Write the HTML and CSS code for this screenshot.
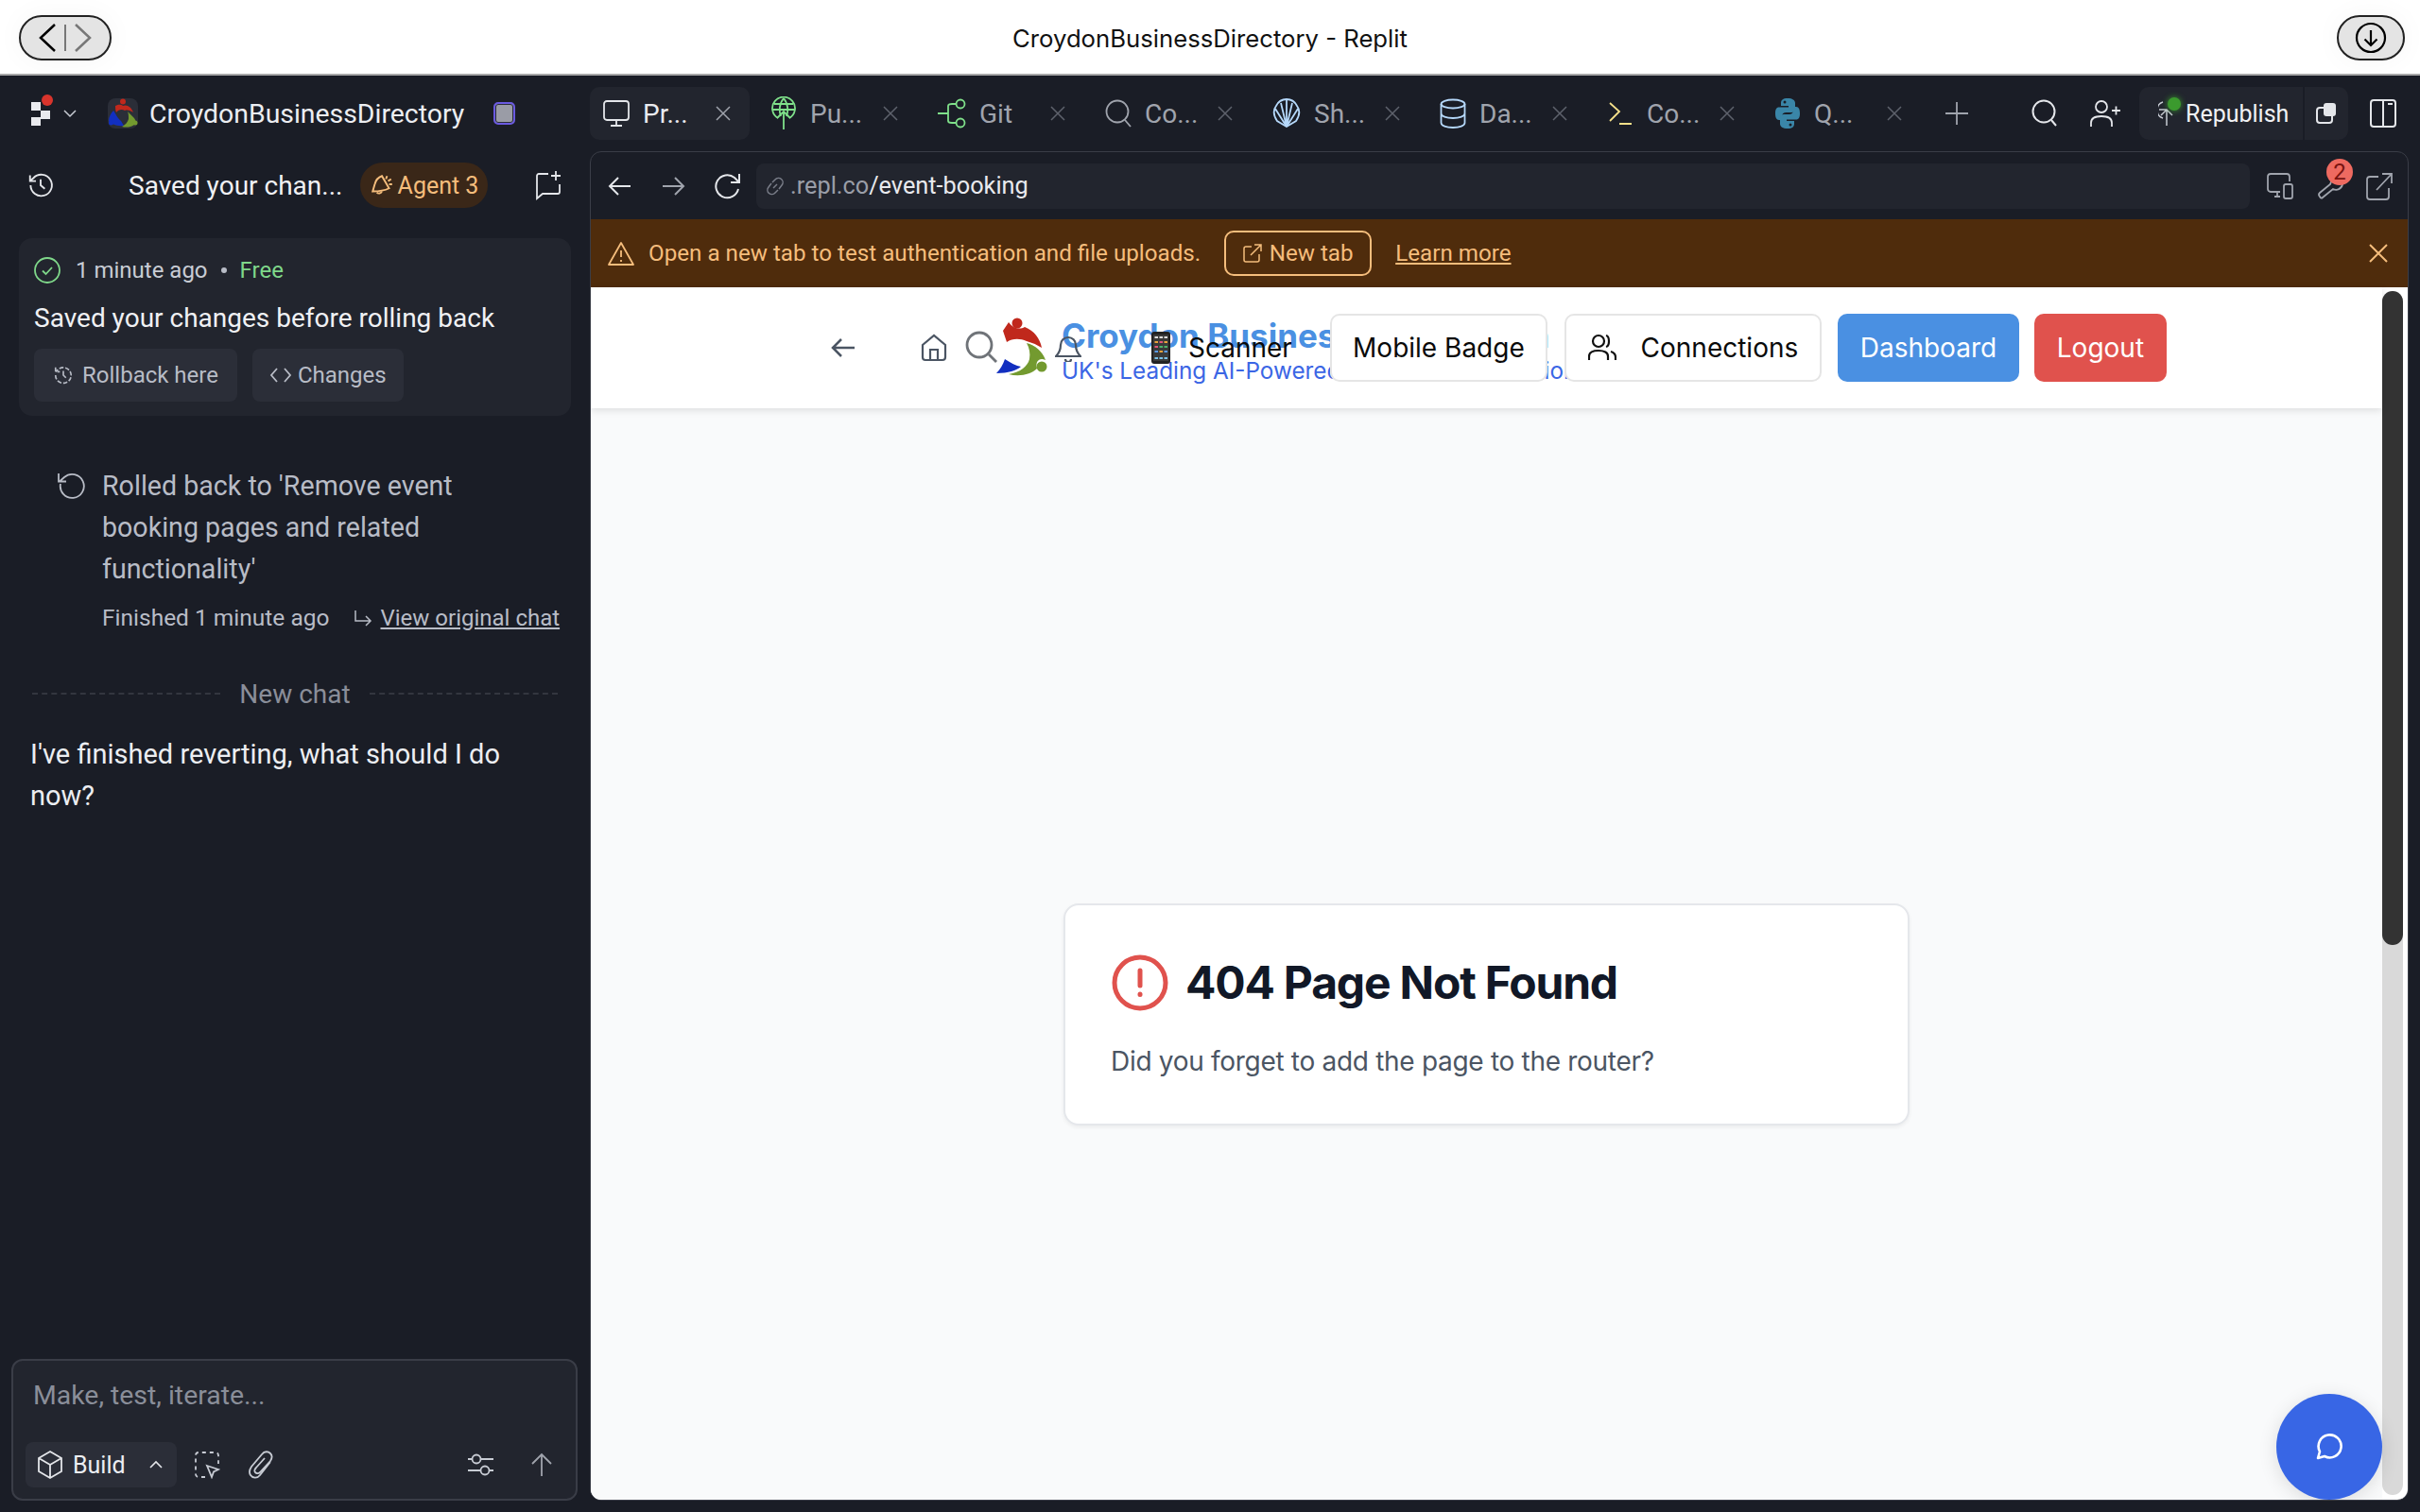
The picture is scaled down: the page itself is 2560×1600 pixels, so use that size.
FILE: index.html
```html
<!DOCTYPE html>
<html lang="en">
<head>
  <meta charset="UTF-8" />
  <title>CroydonBusinessDirectory - Replit</title>
  <link rel="stylesheet" href="styles.css">
</head>
<body>

  <svg class="defs" width="0" height="0">
    <symbol id="brand" viewBox="0 0 64 64">
      <circle cx="27" cy="6" r="5.5" fill="#c0281c"/>
      <path fill="#c0281c" d="M18 5L12 14L16 26C22 22 30 22 37 25Q45 27 53 32C51 22 45 14 35 10C30 13 23 12 18 5Z"/>
      <path fill="#739a2f" d="M37 27C46 29 54 36 57 45C50 42 46 47 48 54C42 60 30 63 18 60C30 58 38 52 40 44C41 38 40 32 37 27Z"/>
      <circle cx="53" cy="52" r="5.5" fill="#739a2f"/>
      <path fill="#122fc0" d="M14 44C20 48 26 51 31 52C26 56 18 59 5 59C9 55 12 50 14 44Z"/>
    </symbol>
    <symbol id="app-mark" viewBox="0 0 32 32">
      <circle cx="16" cy="3.500" r="3" fill="#c0281c"/>
      <path fill="#c0281c" d="M8 8C11 7 13 6 16 8C20 6 25 9 27 15C24 13 21 12 18 13C15 11 11 12 9 15C8 13 8 10 8 8Z"/>
      <path fill="#122fc0" d="M6 13C9 17 10 21 14 24L17 29C10 30 3 27 1 24C1 20 3 16 6 13Z"/>
      <circle cx="3.500" cy="26" r="2.500" fill="#122fc0"/>
      <path fill="#739a2f" d="M21 14L28 21C30 24 30 26 28 28C24 31 19 31 15 30C19 28 21 25 22 22C22 19 22 16 21 14Z"/>
      <circle cx="29" cy="26" r="2.500" fill="#739a2f"/>
    </symbol>
    <symbol id="tab-close" viewBox="0 0 16 16">
      <path d="M1 1L15 15M15 1L1 15" fill="none" stroke="currentColor" stroke-width="1.500"/>
    </symbol>
  </svg>

  <!-- window title bar -->
  <header class="titlebar">
    <div class="pill pill-nav">
      <svg width="26" height="34" viewBox="0 0 26 34"><path d="M21 3L6 17L21 31" fill="none" stroke="#000" stroke-width="2.5"/></svg>
      <span class="pill-sep"></span>
      <svg width="26" height="34" viewBox="0 0 26 34"><path d="M5 3L20 17L5 31" fill="none" stroke="#777" stroke-width="2.5"/></svg>
    </div>
    <div class="window-title">CroydonBusinessDirectory - Replit</div>
    <div class="pill pill-dl">
      <svg width="34" height="34" viewBox="0 0 34 34" fill="none" stroke="#000" stroke-width="2.2"><circle cx="17" cy="17" r="15"/><path d="M17 9V25M10.500 18.500L17 25L23.500 18.500"/></svg>
    </div>
  </header>

  <div class="workspace">

    <!-- left: agent chat -->
    <aside class="sidebar">
      <div class="side-top">
        <div class="replit-logo">
          <span class="rl-dot"></span>
          <span class="rl-sq rl-a"></span><span class="rl-sq rl-b"></span><span class="rl-sq rl-c"></span>
        </div>
        <svg class="ic-chev" width="16" height="10" viewBox="0 0 16 10" fill="none" stroke="#c8ccd4" stroke-width="1.500"><path d="M2 2L8 8L14 2"/></svg>
        <span class="app-icon"><svg width="32" height="32"><use href="#app-mark"/></svg></span>
        <span class="app-name">CroydonBusinessDirectory</span>
        <span class="app-chip"></span>
      </div>

      <div class="side-head">
        <svg class="ic-hist" width="30" height="30" viewBox="0 0 24 24" fill="none" stroke="#e4e6ea" stroke-width="1.500"><path d="M3.500 12A9 9 0 1 0 6 5.800L3 8.500M3 3.500V8.500H8"/><path d="M12 7V12L15.500 15"/></svg>
        <span class="side-title">Saved your chan...</span>
        <span class="agent-pill">
          <svg width="26" height="26" viewBox="0 0 24 24" fill="none" stroke="#f5bd7c" stroke-width="1.800"><path d="M3 18L5 11C6 7 9 4 12 3L19 15C15 17 8 18 3 18Z"/><path d="M7 19A3 3 0 0 0 12 18"/><path d="M17 3L16 6M21 6L18 8M22 11L19 11"/></svg>
          Agent 3
        </span>
        <svg class="ic-newchat" width="30" height="32" viewBox="0 0 30 32" fill="none" stroke="#e4e6ea" stroke-width="1.800"><path d="M15 4H5A2 2 0 0 0 3 6V30L9 25H25A2 2 0 0 0 27 23V15"/><path d="M23 1V11M18 6H28"/></svg>
      </div>

      <section class="checkpoint">
        <div class="cp-meta">
          <svg width="28" height="28" viewBox="0 0 28 28" fill="none" stroke="#7fd88a" stroke-width="1.800"><circle cx="14" cy="14" r="13"/><path d="M9 14.500L12.500 18L19 11"/></svg>
          <span class="cp-time">1 minute ago</span>
          <span class="cp-dot"></span>
          <span class="cp-free">Free</span>
        </div>
        <div class="cp-title">Saved your changes before rolling back</div>
        <div class="cp-actions">
          <button class="cp-btn">
            <svg width="22" height="22" viewBox="0 0 24 24" fill="none" stroke="#b8bcc6" stroke-width="1.800"><path d="M3 12A9 9 0 1 0 6 5.500L3 8M3 3V8H8" stroke-dasharray="5 2"/><path d="M12 7V12L15 15"/></svg>
            Rollback here
          </button>
          <button class="cp-btn cp-btn-code">
            <svg width="24" height="22" viewBox="0 0 24 22" fill="none" stroke="#b8bcc6" stroke-width="1.800"><path d="M8 4L2 11L8 18M16 4L22 11L16 18"/></svg>
            Changes
          </button>
        </div>
      </section>

      <section class="rollback">
        <svg class="rb-icon" width="30" height="32" viewBox="0 0 30 32" fill="none" stroke="#b8bcc6" stroke-width="1.800"><path d="M4 14A12.500 12.500 0 1 0 8 7L3 11.500M2 3V11.500H10"/></svg>
        <div class="rb-body">
          <p class="rb-text">Rolled back to 'Remove event booking pages and related functionality'</p>
          <div class="rb-foot">
            <span>Finished 1 minute ago</span>
            <svg width="20" height="20" viewBox="0 0 20 20" fill="none" stroke="#b8bcc6" stroke-width="1.500"><path d="M2 2V13H18M13 8L18 13L13 18"/></svg>
            <a class="rb-link">View original chat</a>
          </div>
        </div>
      </section>

      <div class="divider"><span>New chat</span></div>

      <p class="agent-msg">I've finished reverting, what should I do now?</p>

      <div class="composer">
        <div class="composer-text">Make, test, iterate...</div>
        <div class="composer-bar">
          <span class="build-pill">
            <svg width="28" height="32" viewBox="0 0 28 32" fill="none" stroke="#e4e6ea" stroke-width="1.800"><path d="M14 2L26 9V23L14 30L2 23V9ZM2 9L14 16L26 9M14 16V30"/></svg>
            <span class="build-label">Build</span>
            <svg class="build-chev" width="16" height="10" viewBox="0 0 16 10" fill="none" stroke="#e4e6ea" stroke-width="1.600"><path d="M2 8L8 2L14 8"/></svg>
          </span>
          <svg class="ic-select" width="28" height="30" viewBox="0 0 28 30" fill="none" stroke="#c8ccd4" stroke-width="1.800"><path d="M12 28H5A3 3 0 0 1 2 25V5A3 3 0 0 1 5 2H23A3 3 0 0 1 26 5V14" stroke-dasharray="4 4"/><path d="M14 16L26 20L21 22.500L19 28Z"/></svg>
          <svg class="ic-clip" width="28" height="32" viewBox="0 0 28 32" fill="none" stroke="#c8ccd4" stroke-width="1.800"><path d="M24 13L13 27C10 31 5 30 3 27C1 24 2 21 4 18L15 5C18 1 22 2 24 4C26 6 26 9 24 12L13 24C11 26 9 25 8 24C7 23 7 21 9 19L18 9"/></svg>
          <svg class="ic-sliders" width="30" height="26" viewBox="0 0 30 26" fill="none" stroke="#c8ccd4" stroke-width="1.800"><path d="M1 7H5M15 7H28M1 19H14M24 19H28"/><circle cx="10" cy="7" r="4.500"/><circle cx="19" cy="19" r="4.500"/></svg>
          <svg class="ic-up" width="24" height="26" viewBox="0 0 24 26" fill="none" stroke="#a0a4ad" stroke-width="1.800"><path d="M12 25V2M2 12L12 2L22 12"/></svg>
        </div>
      </div>
    </aside>

    <!-- right: tabs and preview pane -->
    <main class="main">
      <div class="tabbar">
        <div class="tab tab-active">
          <svg class="tab-ic" width="28" height="30" viewBox="0 0 28 30" fill="none" stroke="#e4e6ea" stroke-width="1.800"><rect x="1" y="2" width="26" height="20" rx="3"/><path d="M14 22V28M8 28H20"/></svg>
          <span class="tab-label">Pr...</span>
          <svg class="tab-x" width="16" height="16"><use href="#tab-close"/></svg>
        </div>
        <div class="tab">
          <svg class="tab-ic" width="28" height="36" viewBox="0 0 28 36" fill="none" stroke="#7fe08a" stroke-width="1.800"><path d="M8 23A12 12 0 1 1 20 23"/><path d="M2 14H26M4 8H24M14 2C9 8 9 16 11 21M14 2C19 8 19 16 17 21"/><path d="M14 35V16M7 23L14 16L21 23"/></svg>
          <span class="tab-label">Pu...</span>
          <svg class="tab-x" width="16" height="16"><use href="#tab-close"/></svg>
        </div>
        <div class="tab">
          <svg class="tab-ic" width="30" height="32" viewBox="0 0 30 32" fill="none" stroke="#7fe08a" stroke-width="1.800"><path d="M0 16H11M11 16V8C11 6 13 6 15 6H19M11 16V24C11 26 13 26 15 26H19"/><circle cx="24" cy="6" r="4.500"/><circle cx="24" cy="26" r="4.500"/></svg>
          <span class="tab-label">Git</span>
          <svg class="tab-x" width="16" height="16"><use href="#tab-close"/></svg>
        </div>
        <div class="tab">
          <svg class="tab-ic" width="28" height="30" viewBox="0 0 28 30" fill="none" stroke="#a0a4ad" stroke-width="1.800"><circle cx="13" cy="13" r="11.500"/><path d="M21 22L27 29"/></svg>
          <span class="tab-label">Co...</span>
          <svg class="tab-x" width="16" height="16"><use href="#tab-close"/></svg>
        </div>
        <div class="tab">
          <svg class="tab-ic" width="30" height="32" viewBox="0 0 30 32" fill="none" stroke="#b5d8fa" stroke-width="1.800"><path d="M15 30L5 24C1 18 1 12 4 8C6 4 10 1 15 1C20 1 24 4 26 8C29 12 29 18 25 24Z"/><path d="M15 30L9 5M15 30V1M15 30L21 5M15 30L3 11M15 30L27 11"/></svg>
          <span class="tab-label">Sh...</span>
          <svg class="tab-x" width="16" height="16"><use href="#tab-close"/></svg>
        </div>
        <div class="tab">
          <svg class="tab-ic" width="28" height="32" viewBox="0 0 28 32" fill="none" stroke="#b5d8fa" stroke-width="1.800"><ellipse cx="14" cy="6" rx="12.500" ry="4.500"/><path d="M1.500 6V26C1.500 29 7 31 14 31C21 31 26.500 29 26.500 26V6M1.500 16C1.500 19 7 21 14 21C21 21 26.500 19 26.500 16"/></svg>
          <span class="tab-label">Da...</span>
          <svg class="tab-x" width="16" height="16"><use href="#tab-close"/></svg>
        </div>
        <div class="tab">
          <svg class="tab-ic" width="28" height="26" viewBox="0 0 28 26" fill="none" stroke="#f5e08a" stroke-width="1.800"><path d="M3 2L13 11L3 21"/><path d="M13 24H26" stroke-width="2"/></svg>
          <span class="tab-label">Co...</span>
          <svg class="tab-x" width="16" height="16"><use href="#tab-close"/></svg>
        </div>
        <div class="tab">
          <svg class="tab-ic" width="28" height="34" viewBox="0 0 28 34">
            <path id="py-half" fill="#3a86a8" d="M14 1C9 1 7 3 7 6V9H15V10.500H5C2 10.500 1 13 1 17C1 21 2 24 5 24H8V20C8 17.500 10 16 12.500 16H18C20.500 16 22 14.500 22 12V6C22 3 19 1 14 1Z"/>
            <use href="#py-half" transform="rotate(180 14 17)"/>
            <circle cx="11" cy="5" r="1.500" fill="#1a1d26"/>
            <circle cx="17" cy="29" r="1.500" fill="#1a1d26"/>
          </svg>
          <span class="tab-label">Q...</span>
          <svg class="tab-x" width="16" height="16"><use href="#tab-close"/></svg>
        </div>
        <svg class="ic-plus" width="24" height="24" viewBox="0 0 24 24" fill="none" stroke="#a0a4ad" stroke-width="1.800"><path d="M12 0V24M0 12H24"/></svg>
        <svg class="ic-search" width="28" height="30" viewBox="0 0 28 30" fill="none" stroke="#e4e6ea" stroke-width="2"><circle cx="13" cy="13" r="11.500"/><path d="M21 22L26 28"/></svg>
        <svg class="ic-invite" width="32" height="30" viewBox="0 0 32 30" fill="none" stroke="#e4e6ea" stroke-width="1.800"><circle cx="12" cy="8" r="6"/><path d="M1 29V25C1 20 5 18 12 18C19 18 23 20 23 25V29M23 12H32M27.500 7.500V16.500"/></svg>
        <div class="publish">
          <span class="publish-main">
            <span class="publish-ic">
              <svg width="18" height="30" viewBox="0 0 18 30" fill="none" stroke="#c8ccd4" stroke-width="1.500"><path d="M5 20A9 9 0 0 1 5 3M1 11H9M9 28V11M3 17L9 11L15 17"/></svg>
              <span class="publish-dot"></span>
            </span>
            <span>Republish</span>
          </span>
          <span class="publish-more">
            <svg width="22" height="22" viewBox="0 0 22 22"><rect x="1" y="5" width="16" height="16" rx="3" fill="none" stroke="#e4e6ea" stroke-width="2"/><rect x="8" y="0" width="13" height="14" rx="3" fill="#e4e6ea"/></svg>
          </span>
        </div>
        <svg class="ic-panel" width="28" height="30" viewBox="0 0 28 30" fill="none" stroke="#e4e6ea" stroke-width="2"><rect x="1" y="1" width="26" height="28" rx="3"/><path d="M14 1V29M19 5H24"/></svg>
      </div>

      <div class="preview">
        <div class="urlbar">
          <svg class="url-back" width="26" height="22" viewBox="0 0 26 22" fill="none" stroke="#e4e6ea" stroke-width="2"><path d="M24 11H2M11 2L2 11L11 20"/></svg>
          <svg class="url-fwd" width="26" height="22" viewBox="0 0 26 22" fill="none" stroke="#a0a4ad" stroke-width="2"><path d="M2 11H24M15 2L24 11L15 20"/></svg>
          <svg class="url-reload" width="30" height="30" viewBox="0 0 30 30" fill="none" stroke="#e4e6ea" stroke-width="2"><path d="M26 18A12 12 0 1 1 22 6L27 11M27 2V11H18"/></svg>
          <div class="url-field">
            <svg width="22" height="22" viewBox="0 0 22 22" fill="none" stroke="#7a7e89" stroke-width="1.500"><path d="M9 13L13 9M8 7L11 4A4.200 4.200 0 0 1 18 10L15 14M14 15L11 18A4.200 4.200 0 0 1 4 12L7 8"/></svg>
            <span class="url-host">.repl.co</span><span class="url-path">/event-booking</span>
          </div>
          <svg class="url-devices" width="28" height="28" viewBox="0 0 28 28" fill="none" stroke="#a0a4ad" stroke-width="1.800"><path d="M14 20H4A3 3 0 0 1 1 17V4A3 3 0 0 1 4 1H21A3 3 0 0 1 24 4V9M8 25H14M11 20V25"/><rect x="18" y="12" width="9" height="15" rx="2"/></svg>
          <span class="url-tools">
            <svg width="28" height="28" viewBox="0 0 28 28" fill="none" stroke="#a0a4ad" stroke-width="1.800"><path d="M3 25C1 23 2 22 3 21L14 12C15 8 18 5 22 5L27 12C26 17 21 19 17 17L6 26C5 27 4 27 3 25Z"/></svg>
            <span class="tools-badge">2</span>
          </span>
          <svg class="url-open" width="28" height="30" viewBox="0 0 28 30" fill="none" stroke="#a0a4ad" stroke-width="1.800"><path d="M13 5H4A3 3 0 0 0 1 8V26A3 3 0 0 0 4 29H21A3 3 0 0 0 24 26V17M11 19L27 2M17 2H27V12"/></svg>
        </div>

        <div class="banner">
          <svg class="banner-warn" width="28" height="26" viewBox="0 0 28 26" fill="none" stroke="#f5bd7c" stroke-width="1.800"><path d="M14 2L27 25H1Z" stroke-linejoin="round"/><path d="M14 10V17M14 20V22"/></svg>
          <span class="banner-text">Open a new tab to test authentication and file uploads.</span>
          <span class="banner-btn">
            <svg width="20" height="20" viewBox="0 0 20 20" fill="none" stroke="#f5bd7c" stroke-width="1.500"><path d="M9 3H3A2 2 0 0 0 1 5V17A2 2 0 0 0 3 19H15A2 2 0 0 0 17 17V11M8 12L19 1M12 1H19V8"/></svg>
            New tab
          </span>
          <a class="banner-link">Learn more</a>
          <svg class="banner-close" width="20" height="20" viewBox="0 0 20 20" fill="none" stroke="#f5bd7c" stroke-width="2"><path d="M1 1L19 19M19 1L1 19"/></svg>
        </div>

        <div class="page">
          <div class="page-main">
            <nav class="site-nav">
              <div class="brand">
                <svg width="64" height="64"><use href="#brand"/></svg>
                <div class="brand-text">
                  <div class="brand-name">Croydon Business Connection</div>
                  <div class="brand-sub">UK's Leading AI-Powered Business Association</div>
                </div>
              </div>
              <svg class="nav-back" width="28" height="24" viewBox="0 0 28 24" fill="none" stroke="#4b5563" stroke-width="2.500"><path d="M26 12H3M12 3L3 12L12 21"/></svg>
              <svg class="nav-home" width="28" height="30" viewBox="0 0 28 30" fill="none" stroke="#4b5563" stroke-width="2.200"><path d="M2 12L14 2L26 12V25A3 3 0 0 1 23 28H5A3 3 0 0 1 2 25ZM10 28V17H18V28"/></svg>
              <svg class="nav-search" width="34" height="36" viewBox="0 0 34 36" fill="none" stroke="#6f7378" stroke-width="2.800"><circle cx="15" cy="15" r="13"/><path d="M25 25L33 33"/></svg>
              <svg class="nav-bell" width="28" height="30" viewBox="0 0 28 30" fill="none" stroke="#4b5563" stroke-width="2.200"><path d="M6 12A8 8 0 0 1 22 12C22 18 24 21 27 24H1C4 21 6 18 6 12Z"/><path d="M11 27A3 3 0 0 0 17 27"/></svg>
              <svg class="nav-phone" width="20" height="34" viewBox="0 0 20 34">
                <rect width="20" height="34" rx="3" fill="#222"/>
                <rect x="2" y="3" width="16" height="28" fill="#3a3a3a"/>
                <path d="M3.500 6H7M8.500 6H12M13.500 6H17" stroke="#ddd" stroke-width="2"/>
                <path d="M3.500 11H7M13.500 11H17" stroke="#e9a23b" stroke-width="2"/>
                <path d="M8.500 11H12M3.500 16H7" stroke="#e0557a" stroke-width="2"/>
                <path d="M8.500 16H12M13.500 16H17" stroke="#4db36b" stroke-width="2"/>
                <path d="M3.500 21H7M13.500 21H17" stroke="#5a9be8" stroke-width="2"/>
                <path d="M8.500 21H12" stroke="#e9a23b" stroke-width="2"/>
                <path d="M3.500 28H7M8.500 28H12M13.500 28H17" stroke="#7cc4e8" stroke-width="2"/>
              </svg>
              <span class="nav-scanner">Scanner</span>
              <span class="nav-btn nav-badge">Mobile Badge</span>
              <span class="nav-btn nav-conn">
                <svg width="30" height="30" viewBox="0 0 30 30" fill="none" stroke="#111" stroke-width="2.200"><circle cx="11" cy="8" r="6"/><path d="M1 28V24C1 20 5 18 11 18C17 18 21 20 21 24V28M19 2C23 3 23 13 19 14M24 19C27 20 29 22 29 25V28"/></svg>
                Connections
              </span>
              <span class="nav-btn nav-dash">Dashboard</span>
              <span class="nav-btn nav-out">Logout</span>
            </nav>

            <div class="notfound-wrap">
              <div class="notfound">
                <div class="nf-head">
                  <svg width="60" height="60" viewBox="0 0 60 60" fill="none" stroke="#e0524d" stroke-width="5"><circle cx="30" cy="30" r="27"/><path d="M30 17V33" stroke-linecap="round"/><path d="M30 42V42.500" stroke-linecap="round"/></svg>
                  <h1>404 Page Not Found</h1>
                </div>
                <p>Did you forget to add the page to the router?</p>
              </div>
            </div>
          </div>

          <div class="scroll-track"><div class="scroll-thumb"></div></div>

          <div class="chat-fab">
            <svg width="30" height="30" viewBox="0 0 30 30" fill="none" stroke="#fff" stroke-width="2.600"><path d="M3 27L5 20A12 12 0 1 1 10 25Z" stroke-linejoin="round"/></svg>
          </div>
        </div>
      </div>
    </main>
  </div>

</body>
</html>
```

FILE: styles.css
```css
* { box-sizing: border-box; }

html, body {
  margin: 0;
  height: 100%;
}

body {
  width: 2560px;
  height: 1600px;
  overflow: hidden;
  background: #1a1d26;
  font-family: Roboto, "Noto Sans", sans-serif;
  color: #f0f1f4;
}

svg { display: block; flex: none; }
.defs { position: absolute; }

/* title bar */
.titlebar {
  height: 80px;
  background: #fff;
  border-bottom: 2px solid #a8a8a8;
  display: flex;
  align-items: center;
  justify-content: space-between;
  padding: 2px 16px 0 20px;
  position: relative;
}

.pill {
  height: 48px;
  background: #e4e4e4;
  border: 2px solid #222;
  border-radius: 24px;
  display: flex;
  align-items: center;
  justify-content: center;
  box-shadow: 0 0 30px rgba(0, 0, 0, 0.04);
}

.pill-nav { width: 98px; gap: 5px; }
.pill-dl { width: 72px; }

.pill-sep {
  width: 2px;
  height: 28px;
  background: #777;
}

.window-title {
  position: absolute;
  left: 0;
  right: 0;
  text-align: center;
  font-family: Inter, sans-serif;
  font-size: 25.7px;
  color: #111;
}

.workspace {
  display: flex;
  height: 1520px;
}

/* sidebar */
.sidebar {
  width: 624px;
  flex: none;
  display: flex;
  flex-direction: column;
  height: 1508px;
}

.side-top {
  height: 80px;
  display: flex;
  align-items: center;
  padding-left: 33px;
}

.replit-logo {
  position: relative;
  width: 22px;
  height: 32px;
  margin-bottom: 8px;
  flex: none;
}

.rl-dot {
  position: absolute;
  left: 11px;
  top: 0;
  width: 12px;
  height: 12px;
  border-radius: 50%;
  background: #d8342c;
}

.rl-sq {
  position: absolute;
  width: 10px;
  height: 9px;
  background: #e9eaee;
}

.rl-a { left: 0; top: 8px; }
.rl-b { left: 10px; top: 17px; }
.rl-c { left: 0; top: 24px; }

.ic-chev { margin-left: 11px; }

.app-icon {
  width: 32px;
  height: 32px;
  margin-left: 32px;
  border-radius: 8px;
  background: #2b2e38;
  display: flex;
  align-items: center;
  justify-content: center;
}

.app-name {
  margin-left: 12px;
  font-size: 28.4px;
  width: 332px;
  white-space: nowrap;
  color: #eceef2;
}

.app-chip {
  width: 23px;
  height: 24px;
  margin-left: 32px;
  border-radius: 5px;
  background: #9a9ca6;
  border: 2px solid #6a5ae0;
  box-shadow: inset 0 0 0 1px #2b2e38;
}

.side-head {
  height: 80px;
  margin-top: -4px;
  display: flex;
  align-items: center;
  padding-left: 28px;
}

.side-title {
  margin-left: 78px;
  width: 225px;
  font-size: 28px;
  white-space: nowrap;
}

.agent-pill {
  margin-left: 20px;
  width: 135px;
  height: 48px;
  border-radius: 24px;
  background: #3a2718;
  color: #f5bd7c;
  font-size: 25px;
  display: flex;
  align-items: center;
  justify-content: center;
  gap: 4px;
}

.ic-newchat { margin-left: 49px; }

.checkpoint {
  margin: 16px 20px 0;
  height: 188px;
  background: #22252e;
  border-radius: 14px;
  padding: 20px 16px 0;
}

.cp-meta {
  display: flex;
  align-items: center;
  font-size: 24px;
  color: #c8ccd4;
  height: 28px;
}

.cp-time { margin-left: 16px; }

.cp-dot {
  width: 6px;
  height: 6px;
  border-radius: 50%;
  background: #b8bcc6;
  margin: 0 14px;
}

.cp-free { color: #7fd88a; }

.cp-title {
  margin-top: 19px;
  font-size: 28px;
  line-height: 36px;
  white-space: nowrap;
}

.cp-actions {
  display: flex;
  gap: 16px;
  margin-top: 14px;
}

.cp-btn {
  height: 56px;
  padding: 0 20px;
  background: #2b2e38;
  border: none;
  border-radius: 8px;
  color: #b8bcc6;
  font: inherit;
  font-size: 24px;
  display: flex;
  align-items: center;
  gap: 9px;
}

.cp-btn-code {
  padding: 0 18px;
  gap: 6px;
}

.rollback {
  display: flex;
  margin-top: 52px;
  padding-left: 60px;
}

.rb-icon { margin-top: 6px; }

.rb-body {
  margin-left: 18px;
  width: 500px;
}

.rb-text {
  margin: 0;
  width: 420px;
  font-size: 28.6px;
  line-height: 44px;
  color: #b8bcc6;
}

.rb-foot {
  display: flex;
  align-items: center;
  margin-top: 15px;
  font-size: 24.5px;
  color: #b8bcc6;
  white-space: nowrap;
}

.rb-foot svg { margin: 0 8px 0 26px; }

.rb-link {
  font-size: 24px;
  text-decoration: underline;
}

.divider {
  display: flex;
  align-items: center;
  margin: 46px 34px 0;
  font-size: 28px;
  color: #8a8e99;
  gap: 20px;
  height: 40px;
}

.divider::before,
.divider::after {
  content: "";
  flex: 1;
  border-top: 2px dashed #33363f;
}

.agent-msg {
  margin: 22px 0 0 32px;
  width: 530px;
  font-size: 29px;
  line-height: 44px;
  color: #eceef2;
}

.composer {
  margin: auto 13px 0 12px;
  height: 150px;
  background: #22252e;
  border: 2px solid #3a3d47;
  border-radius: 12px;
  padding: 19px 13px 0;
  display: flex;
  flex-direction: column;
}

.composer-text {
  font-size: 28.4px;
  line-height: 36px;
  padding-left: 8px;
  color: #8a8e99;
}

.composer-bar {
  margin-top: 31px;
  display: flex;
  align-items: center;
}

.build-pill {
  width: 160px;
  height: 48px;
  background: #2b2e38;
  border-radius: 8px;
  display: flex;
  align-items: center;
  padding-left: 12px;
}

.build-label {
  margin-left: 10px;
  font-size: 25px;
  color: #eceef2;
}

.build-chev { margin-left: 24px; }
.ic-select { margin-left: 18px; }
.ic-clip { margin-left: 29px; }
.ic-sliders { margin-left: auto; }
.ic-up { margin: 0 11px 0 37px; }

/* tabs */
.main {
  flex: 1;
  min-width: 0;
  display: flex;
  flex-direction: column;
  padding-right: 12px;
  height: 1508px;
}

.tabbar {
  height: 80px;
  display: flex;
  align-items: center;
  gap: 8px;
}

.tab {
  width: 169px;
  height: 56px;
  flex: none;
  border-radius: 10px;
  display: flex;
  align-items: center;
  padding: 0 20px 0 14px;
  color: #a0a4ad;
  font-size: 28px;
}

.tab-active {
  background: #22252e;
  color: #e9eaee;
}

.tab-ic { margin-right: 14px; }
.tab-label { white-space: nowrap; }

.tab-x {
  margin-left: auto;
  color: #5e626c;
}

.tab-active .tab-x { color: #a0a4ad; }

.ic-plus { margin-left: 18px; }
.ic-search { margin-left: 59px; }
.ic-invite { margin-left: 26px; }

.publish {
  margin-left: 12px;
  width: 221px;
  height: 56px;
  flex: none;
  border-radius: 10px;
  background: #22252e;
  display: flex;
  align-items: stretch;
}

.publish-main {
  width: 175px;
  border-right: 2px solid #1a1d26;
  display: flex;
  align-items: center;
  padding-left: 20px;
  gap: 9px;
  font-size: 25px;
  color: #f0f1f4;
}

.publish-ic {
  position: relative;
  width: 20px;
}

.publish-dot {
  position: absolute;
  top: -2px;
  right: -4px;
  width: 14px;
  height: 14px;
  border-radius: 50%;
  background: #3b9a2e;
  box-shadow: 0 0 6px #3b9a2e;
}

.publish-more {
  flex: 1;
  display: flex;
  align-items: center;
  justify-content: center;
}

.ic-panel { margin-left: 15px; }

/* preview pane */
.preview {
  flex: 1;
  min-height: 0;
  display: flex;
  flex-direction: column;
  border: 1px solid #3a3d47;
  border-radius: 12px;
  overflow: hidden;
}

.urlbar {
  height: 71px;
  flex: none;
  display: flex;
  align-items: center;
  padding-left: 18px;
}

.url-fwd { margin-left: 30px; }
.url-reload { margin-left: 30px; }

.url-field {
  margin-left: 15px;
  width: 1580px;
  height: 48px;
  background: #22252e;
  border-radius: 8px;
  display: flex;
  align-items: center;
  padding-left: 9px;
  font-size: 25.3px;
  white-space: nowrap;
}

.url-host { margin-left: 5px; color: #9a9ea8; }
.url-path { color: #e9eaee; }

.url-devices { margin-left: 18px; }

.url-tools {
  position: relative;
  margin-left: 25px;
}

.tools-badge {
  position: absolute;
  top: -15px;
  right: -10px;
  width: 28px;
  height: 28px;
  border-radius: 50%;
  background: #ee6a60;
  color: #7a1410;
  font-size: 24px;
  line-height: 28px;
  text-align: center;
}

.url-open { margin-left: 24px; }

.banner {
  height: 72px;
  flex: none;
  background: #4f2c0c;
  color: #f5bd7c;
  font-size: 24.2px;
  display: flex;
  align-items: center;
  padding-left: 18px;
}

.banner-text {
  margin-left: 15px;
  white-space: nowrap;
}

.banner-btn {
  margin-left: 25px;
  width: 156px;
  height: 48px;
  border: 2px solid #f5bd7c;
  border-radius: 10px;
  display: flex;
  align-items: center;
  justify-content: center;
  gap: 8px;
}

.banner-link {
  margin-left: 25px;
  text-decoration: underline;
}

.banner-close { margin-left: auto; margin-right: 21px; }

.page {
  flex: 1;
  min-height: 0;
  display: flex;
  position: relative;
  background: #fff;
}

.page-main {
  flex: 1;
  min-width: 0;
  display: flex;
  flex-direction: column;
  background: #f9fafb;
}

/* the app's own nav */
.site-nav {
  height: 128px;
  flex: none;
  position: relative;
  background: #fff;
  box-shadow: 0 2px 8px rgba(0, 0, 0, 0.12);
  display: flex;
  align-items: center;
  padding: 0 0 0 253px;
  font-family: Inter, sans-serif;
  font-size: 28px;
  color: #0a0a0a;
}

.brand {
  position: absolute;
  left: 424px;
  top: 32px;
  display: flex;
  gap: 10px;
}

.brand-text { white-space: nowrap; }

.brand-name {
  font-size: 35px;
  font-weight: 700;
  line-height: 38px;
  color: #4a90e2;
}

.brand-sub {
  margin-top: 4px;
  font-size: 24.3px;
  line-height: 28px;
  color: #3b66e5;
}

.site-nav > svg,
.nav-scanner,
.nav-btn { position: relative; }

.nav-home { margin-left: 68px; }
.nav-search { margin-left: 19px; }
.nav-bell { margin-left: 61px; }
.nav-phone { margin-left: 74px; }
.nav-scanner { margin-left: 19px; }

.nav-btn {
  height: 72px;
  border-radius: 10px;
  display: flex;
  align-items: center;
  justify-content: center;
  white-space: nowrap;
}

.nav-badge,
.nav-conn {
  background: #fff;
  border: 2px solid #e5e5e5;
}

.nav-badge { margin-left: 40px; width: 230px; }
.nav-conn { margin-left: 18px; width: 272px; gap: 26px; }
.nav-dash { margin-left: 17px; width: 192px; background: #4a90e2; color: #fff; }
.nav-out { margin-left: 16px; width: 140px; background: #e0524d; color: #fff; }

/* 404 card */
.notfound-wrap {
  flex: 1;
  display: flex;
  align-items: center;
  justify-content: center;
  padding-top: 127px;
}

.notfound {
  width: 895px;
  height: 235px;
  background: #fff;
  border: 2px solid #e5e7eb;
  border-radius: 16px;
  box-shadow: 0 2px 4px rgba(0, 0, 0, 0.06);
  padding: 52px 48px 0;
  font-family: Inter, sans-serif;
}

.nf-head {
  display: flex;
  align-items: center;
  gap: 18px;
  margin-left: 1px;
}

.nf-head h1 {
  margin: 0;
  font-size: 48px;
  line-height: 60px;
  font-weight: 700;
  letter-spacing: -1.2px;
  color: #111827;
}

.notfound p {
  margin: 33px 0 0;
  font-size: 28px;
  line-height: 40px;
  letter-spacing: -0.3px;
  color: #4b5563;
}

/* scrollbar + chat bubble float over the page */
.scroll-track {
  width: 22px;
  margin: 4px 5px 6px 0;
  flex: none;
  background: #d9d9d9;
  border-radius: 11px;
  height: 1274px;
}

.scroll-thumb {
  height: 692px;
  background: #333;
  border-radius: 11px;
}

.chat-fab {
  position: absolute;
  right: 27px;
  bottom: 0;
  width: 112px;
  height: 112px;
  border-radius: 50%;
  background: #3866e5;
  box-shadow: 0 4px 20px rgba(0, 0, 0, 0.12);
  display: flex;
  align-items: center;
  justify-content: center;
}
```
